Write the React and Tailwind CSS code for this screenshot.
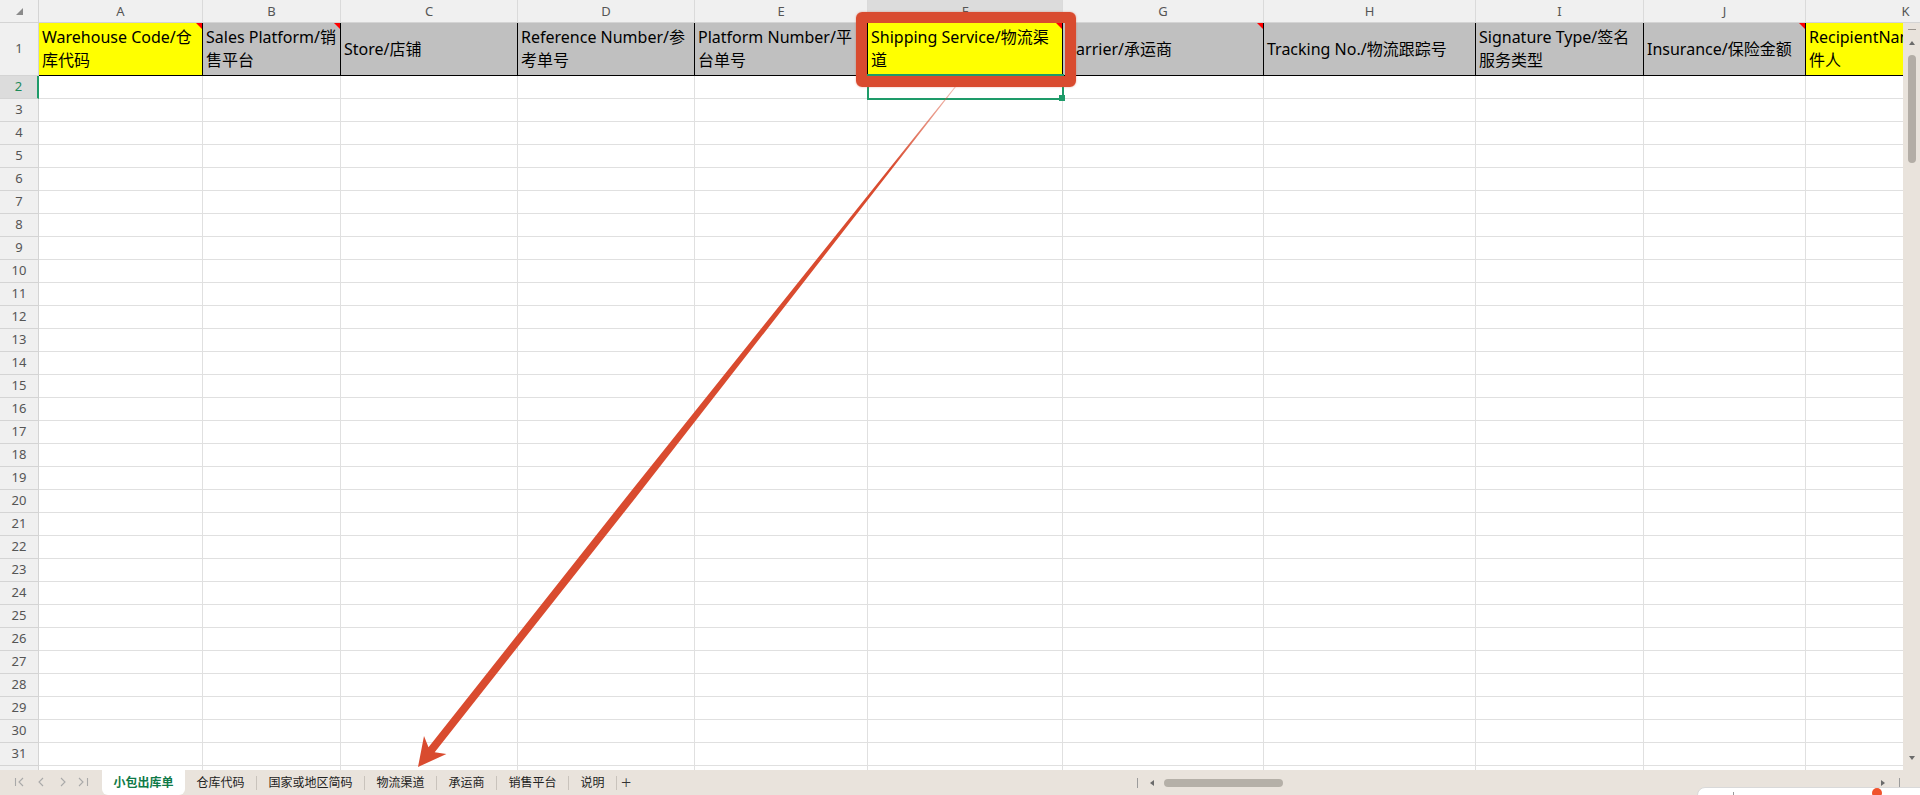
import React from "react";

// sheet columns: width class, header fill, wrapped header lines, comment marker
const COLS = [
  { id: "A", w: "w-[164px]", fill: "bg-[#ffff00]", lines: ["Warehouse Code/仓", "库代码"], note: true },
  { id: "B", w: "w-[138px]", fill: "bg-[#c0c0c0]", lines: ["Sales Platform/销", "售平台"], note: true },
  { id: "C", w: "w-[177px]", fill: "bg-[#c0c0c0]", lines: ["Store/店铺"] },
  { id: "D", w: "w-[177px]", fill: "bg-[#c0c0c0]", lines: ["Reference Number/参", "考单号"] },
  { id: "E", w: "w-[173px]", fill: "bg-[#c0c0c0]", lines: ["Platform Number/平", "台单号"] },
  { id: "F", w: "w-[195px]", fill: "bg-[#ffff00]", lines: ["Shipping Service/物流渠", "道"], note: true, active: true },
  { id: "G", w: "w-[201px]", fill: "bg-[#c0c0c0]", lines: ["Carrier/承运商"], note: true },
  { id: "H", w: "w-[212px]", fill: "bg-[#c0c0c0]", lines: ["Tracking No./物流跟踪号"] },
  { id: "I", w: "w-[168px]", fill: "bg-[#c0c0c0]", lines: ["Signature Type/签名", "服务类型"] },
  { id: "J", w: "w-[162px]", fill: "bg-[#c0c0c0]", lines: ["Insurance/保险金额"], note: true },
  { id: "K", w: "w-[200px]", fill: "bg-[#ffff00]", lines: ["RecipientName/收", "件人"], note: true },
];

const SHEETS = ["仓库代码", "国家或地区简码", "物流渠道", "承运商", "销售平台", "说明"];

const bodyRows = Array.from({ length: 31 }, (_, i) => i + 2);

function NavArrows() {
  return (
    <svg width="102" height="25" viewBox="0 0 102 25" fill="none" stroke="#a9a9a9" strokeWidth="1.1">
      <line x1="15.5" y1="8" x2="15.5" y2="16" />
      <polyline points="23,8 19,12 23,16" />
      <polyline points="43,8 39,12 43,16" />
      <polyline points="61,8 65,12 61,16" />
      <polyline points="79,8 83,12 79,16" />
      <line x1="87.5" y1="8" x2="87.5" y2="16" />
    </svg>
  );
}

function Arrow() {
  return (
    <svg className="absolute left-0 top-0 pointer-events-none" width="1920" height="795" viewBox="0 0 1920 795">
      <defs>
        <linearGradient id="shaft" gradientUnits="userSpaceOnUse" x1="956" y1="86" x2="418" y2="767">
          <stop offset="0" stopColor="#d94b2f" stopOpacity="0.35" />
          <stop offset="0.12" stopColor="#d94b2f" stopOpacity="1" />
          <stop offset="1" stopColor="#d94b2f" stopOpacity="1" />
        </linearGradient>
      </defs>
      <polygon
        fill="url(#shaft)"
        points="956.4,86.3 636.2,497 434.7,752.2 446.4,754 418,767 424,736 428.5,747.2 630.2,492.2 955.6,85.7"
      />
    </svg>
  );
}

export default function App() {
  return (
    <div className="relative w-[1920px] h-[795px] overflow-hidden bg-white font-['Noto_Sans','Noto_Sans_CJK_SC',sans-serif] text-black">
      <div className="flex flex-col h-full">
        {/* column letters */}
        <div className="flex h-[23px] shrink-0 bg-[#f0f0f0] border-b border-[#d4d4d4] overflow-hidden text-[13px] leading-[22px] text-[#555]">
          <div className="w-[39px] shrink-0 border-r border-[#d4d4d4] relative">
            <span className="absolute left-[16px] top-[8px] w-0 h-0 border-l-[7px] border-l-transparent border-b-[7px] border-b-[#8a8a8a]" />
          </div>
          {COLS.map((c) => (
            <div
              key={c.id}
              className={`${c.w} shrink-0 text-center border-r border-[#dadada] ${c.active ? "bg-[#dcdcdc]" : ""}`}
            >
              {c.id}
            </div>
          ))}
          <div className="flex-1" />
        </div>

        <div className="flex flex-1 min-h-0">
          {/* sheet body */}
          <div className="flex-1 overflow-hidden">
            <div className="flex h-[53px]">
              <div className="w-[39px] shrink-0 bg-[#f0f0f0] border-r border-b border-[#d4d4d4] flex items-center justify-center text-[13px] text-[#555]">
                1
              </div>
              {COLS.map((c) => (
                <div
                  key={c.id}
                  className={`${c.w} shrink-0 relative ${c.fill} border-r border-b border-black flex flex-col justify-center pl-[3px] text-[16px] leading-[23px] overflow-hidden`}
                >
                  {c.lines.map((l) => (
                    <div key={l} className="whitespace-nowrap">
                      {l}
                    </div>
                  ))}
                  {c.note && (
                    <span className="absolute right-0 top-0 w-0 h-0 border-l-[6px] border-l-transparent border-t-[6px] border-t-[#ff0000]" />
                  )}
                </div>
              ))}
            </div>

            {bodyRows.map((r) => (
              <div key={r} className="flex h-[23px]">
                <div
                  className={`w-[39px] shrink-0 border-b border-[#d4d4d4] flex items-center justify-center text-[13px] ${
                    r === 2
                      ? "bg-[#dcdcdc] text-[#1e8a5a] border-r-2 border-r-[#1e9b69]"
                      : "bg-[#f0f0f0] text-[#555] border-r"
                  }`}
                >
                  {r}
                </div>
                {COLS.map((c) => (
                  <div key={c.id} className={`${c.w} shrink-0 border-r border-b border-[#e0e0e0]`} />
                ))}
                <div className="flex-1 border-b border-[#e0e0e0]" />
              </div>
            ))}
          </div>

          {/* vertical scrollbar */}
          <div className="w-[17px] shrink-0 bg-[#e9e3dc] flex flex-col items-center pt-[6px] pb-[10px]">
            <div className="shrink-0 h-px w-[8px] bg-[#9a948d]" />
            <div className="shrink-0 mt-[11px] w-0 h-0 border-x-[3.5px] border-x-transparent border-b-[4px] border-b-[#6b6b6b]" />
            <div className="shrink-0 mt-[10px] h-[108px] w-[8px] rounded-full bg-[#b3ada6]" />
            <div className="flex-1" />
            <div className="shrink-0 w-0 h-0 border-x-[3.5px] border-x-transparent border-t-[4px] border-t-[#6b6b6b]" />
          </div>
        </div>

        {/* sheet tabs */}
        <div className="h-[25px] shrink-0 bg-[#e9e3dc] flex items-stretch text-[12px] text-[#222]">
          <div className="w-[102px] shrink-0">
            <NavArrows />
          </div>
          <div className="w-[83px] shrink-0 bg-white rounded-b-[6px] flex items-center justify-center font-semibold text-[#0f7a48]">
            小包出库单
          </div>
          {SHEETS.map((s) => (
            <div key={s} className="flex items-center shrink-0">
              <span className="px-[11.5px]">{s}</span>
              <span className="h-[14px] w-px bg-[#c9c3bc]" />
            </div>
          ))}
          <div className="w-[16px] ml-[1px] flex items-center justify-center text-[18px] font-light text-[#333]">+</div>
          <div className="flex-1" />
          <div className="w-[766px] shrink-0 flex items-center">
            <span className="h-[10px] w-px bg-[#9c9c9c]" />
            <span className="ml-[12px] w-0 h-0 border-y-[3.5px] border-y-transparent border-r-[4px] border-r-[#6b6b6b]" />
            <span className="ml-[10px] w-[119px] h-[8px] rounded-full bg-[#b5b0a8]" />
            <span className="flex-1" />
            <span className="w-0 h-0 border-y-[3.5px] border-y-transparent border-l-[4px] border-l-[#6b6b6b]" />
            <span className="ml-[14px] h-[10px] w-px bg-[#9c9c9c]" />
            <span className="w-[3px]" />
          </div>
          <div className="w-[17px] shrink-0" />
        </div>
      </div>

      {/* active cell F2 */}
      <div className="absolute left-[867px] top-[74px] w-[197px] h-[26px] border-2 border-[#1e9b69]" />
      <div className="absolute left-[1059px] top-[95px] w-[6px] h-[6px] bg-[#1e9b69]" />

      {/* callout box and arrow */}
      <div className="absolute left-[856px] top-[12px] w-[220px] h-[75px] border-[11px] border-[#d94b2f] rounded-[6px] shadow-[0_0_2px_rgba(217,75,47,0.5)]" />
      <Arrow />

      {/* floating widget at bottom right */}
      <div className="absolute left-[1697px] top-[787px] w-[240px] h-[20px] bg-white border border-[#d9d9d9] rounded-t-[8px]" />
      <div className="absolute left-[1733px] top-[792px] w-px h-[3px] bg-[#999]" />
      <div className="absolute left-[1872px] top-[788px] w-[10px] h-[10px] rounded-full bg-[#f0532d]" />
    </div>
  );
}
